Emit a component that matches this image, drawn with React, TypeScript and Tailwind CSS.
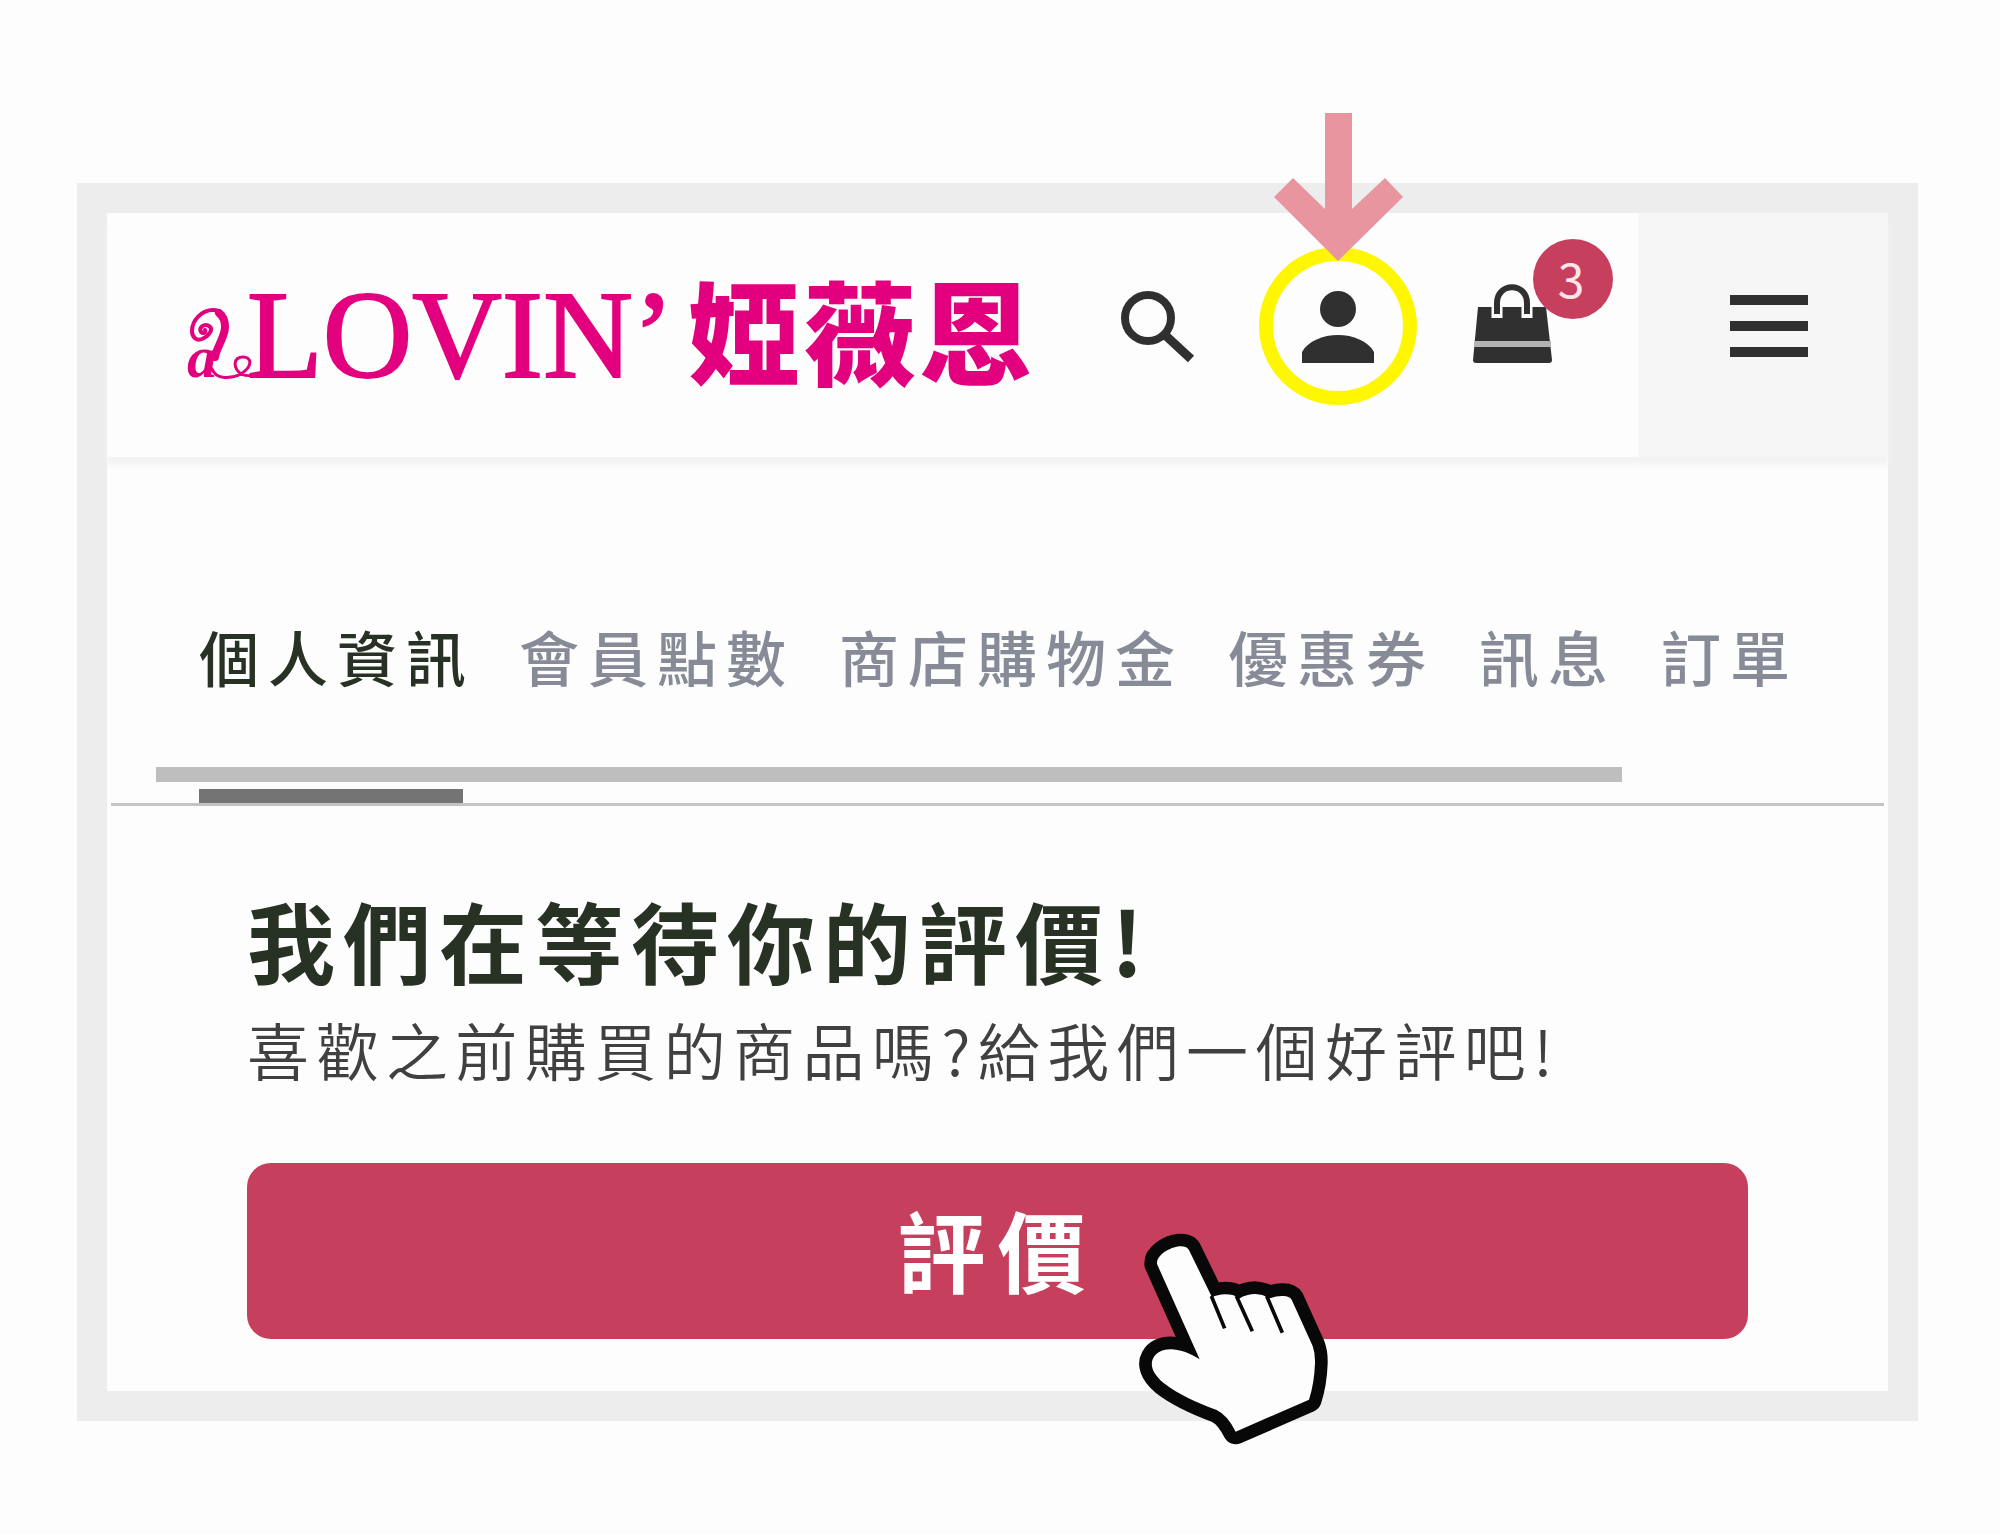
import React, { useState } from 'react';

const tabs = ['個人資訊', '會員點數', '商店購物金', '優惠券', '訊息', '訂單'];

function Logo() {
  return (
    <a href="#home" className="flex items-baseline pt-[18px] text-[#e3007f] whitespace-nowrap">
      <span className="relative font-['Liberation_Serif',serif] font-bold italic text-[60px] leading-none">
        a
        {/* Swirl above the letter and the loop that runs into the next one */}
        <svg
          className="absolute left-0 bottom-0 w-[66px] h-[90px] overflow-visible"
          viewBox="0 0 66 90"
          fill="none"
          stroke="currentColor"
          strokeLinecap="round"
          aria-hidden="true"
        >
          <path d="M28 58C31 48 39 41 39 29C39 19 34 13 26 13C15 13 5 23 5 34C5 41 10 44 15 42C22 39 27 32 22 29C17 26 11 31 14 35C16 37 19 36 18 33" strokeWidth="4" />
          <path d="M28 60C30 49 38 40 38 30C38 23 36 19 32 16" strokeWidth="8" />
          <path d="M25 72C29 83 44 82 54 77C66 69 65 60 56 60C47 60 45 70 54 77C60 80 66 78 76 79" strokeWidth="3" />
        </svg>
      </span>
      <span className="ml-[30px] font-['Liberation_Serif',serif] text-[124px] leading-none [-webkit-text-stroke:2px_#e3007f]">
        LOVIN’
      </span>
      <span className="ml-[14px] font-['Noto_Sans_CJK_TC',sans-serif] font-black text-[112px] leading-none tracking-[4px]">
        婭薇恩
      </span>
    </a>
  );
}

function Header() {
  return (
    <header className="relative flex h-[244px] bg-[#fdfdfd] shadow-[0_8px_6px_#f3f3f3]">
      <div className="flex-1 flex items-center justify-between pl-20 pr-[86px] pb-[18px]">
        <Logo />
        <nav className="flex items-center gap-[55px] text-[#303030]">
          <button aria-label="搜尋">
            <svg className="w-20 h-20 overflow-visible" viewBox="0 0 80 80" fill="none" stroke="currentColor">
              <circle cx="24" cy="32" r="23" strokeWidth="8" />
              <path d="M40 48L67 73" strokeWidth="9" />
            </svg>
          </button>
          <button
            aria-label="會員"
            className="relative flex items-center justify-center w-[158px] h-[158px] rounded-full border-[14px] border-[#fff700]"
          >
            <svg className="w-20 h-20" viewBox="0 0 80 80" fill="currentColor">
              <circle cx="40" cy="23" r="18" />
              <path d="M4 77V66C10 55 25 49 40 49S70 55 76 66V77Z" />
            </svg>
            <svg
              className="absolute bottom-full left-1/2 -translate-x-1/2 w-[130px] h-[148px]"
              viewBox="0 0 130 148"
              fill="#e895a0"
              aria-hidden="true"
            >
              <path d="M52 0H79V96L112 65L130 84L65 148L1 84L20 65L52 96Z" />
            </svg>
          </button>
          <button aria-label="購物車" className="relative">
            <svg className="w-20 h-20 overflow-visible" viewBox="0 0 80 80" fill="none">
              <path d="M6 21H74L80 74Q80 77 77 77H4Q1 77 1 74Z" fill="currentColor" />
              <path d="M25 32V17C25 -5 55 -5 55 17V32" stroke="#fdfdfd" strokeWidth="11" />
              <path d="M2 58H79" stroke="#b3b3b3" strokeWidth="6" />
              <path d="M25 28V17C25 -4 55 -4 55 17V28" stroke="currentColor" strokeWidth="6" />
            </svg>
            <span className="absolute left-[61px] -top-[47px] flex items-center justify-center w-20 h-20 pb-1 pr-1 rounded-full bg-[#c63f5d] text-[#ffe4ea] font-['Noto_Sans_CJK_TC',sans-serif] text-[48px] leading-none">
              3
            </span>
          </button>
        </nav>
      </div>
      <button aria-label="選單" className="w-[250px] flex flex-col items-center justify-center gap-4 pb-[18px] pl-3 bg-[#f6f6f6]">
        <span className="w-[78px] h-[10px] bg-[#303030]" />
        <span className="w-[78px] h-[10px] bg-[#303030]" />
        <span className="w-[78px] h-[10px] bg-[#303030]" />
      </button>
    </header>
  );
}

function HandPointer() {
  return (
    <svg className="absolute left-[853px] top-[37px] w-[270px] h-[270px] pointer-events-none" viewBox="0 0 810 810" aria-hidden="true">
      <path
        d="M171 192C169 165 210 142 238 139Q262 138 268 152L336 292Q352 284 376 283Q402 283 411 293L417 296Q440 282 466 282Q490 284 500 291L509 295Q530 287 550 288Q568 288 575 299L638 438Q646 460 645 490Q643 550 627 599L407 695Q382 645 350 630C290 608 235 583 190 548C155 518 150 492 160 474C178 438 240 438 299 478Z"
        fill="#fdfdfd"
        stroke="#080808"
        strokeWidth="76"
        strokeLinejoin="round"
        paintOrder="stroke"
      />
      <path d="M334 288L374 385M409 288L457 394M500 288L547 398" fill="none" stroke="#080808" strokeWidth="11" />
    </svg>
  );
}

export default function App() {
  const [active, setActive] = useState(0);

  return (
    <div className="min-h-screen bg-[#fdfdfd] pt-[183px] pb-[113px] pl-[77px] pr-[82px] font-['Noto_Sans_CJK_TC',sans-serif]">
      <div className="border-[30px] border-[#ededed]">
        <Header />

        {/* Tabs */}
        <nav className="mt-[159px] pl-[92px] flex gap-11 whitespace-nowrap">
          {tabs.map((tab, i) => (
            <a
              key={tab}
              href="#tab"
              onClick={() => setActive(i)}
              className={`text-[60px] leading-[80px] tracking-[9px] font-medium ${
                i === active ? 'text-[#283224]' : 'text-[#868b97]'
              }`}
            >
              {tab}
            </a>
          ))}
        </nav>
        <div className="mt-[71px] ml-[49px] mr-[266px] h-[15px] bg-[#bebebe]" />
        <div className="mt-[7px] mx-1 pl-[88px] border-b-[3px] border-[#c4c4c4]">
          <div className="w-[264px] h-[14px] bg-[#747474]" />
        </div>

        {/* Review prompt */}
        <section className="px-[140px] pt-[85px] pb-[52px]">
          <h1 className="text-[88px] leading-[96px] tracking-[8px] font-bold text-[#283224]">我們在等待你的評價!</h1>
          <p className="mt-[22px] text-[62px] leading-[80px] tracking-[0.12em] font-[350] text-[#404040]">
            喜歡之前購買的商品嗎?給我們一個好評吧!
          </p>
          <div className="relative mt-[74px]">
            <button className="w-full h-[176px] pb-[6px] rounded-3xl bg-[#c63f5d] text-white text-[88px] leading-none tracking-[12px] font-bold">
              評價
            </button>
            <HandPointer />
          </div>
        </section>
      </div>
    </div>
  );
}
